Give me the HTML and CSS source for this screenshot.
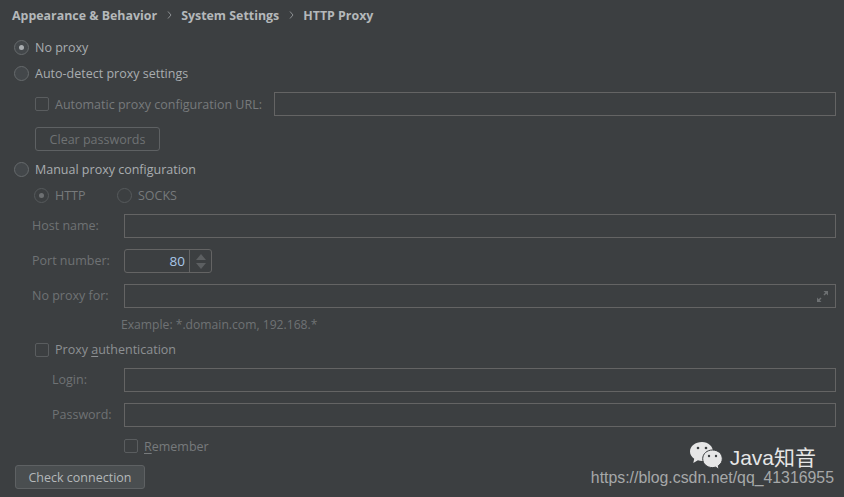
FILE: index.html
```html
<!DOCTYPE html>
<html lang="en">
<head>
<meta charset="utf-8">
<title>HTTP Proxy</title>
<link rel="stylesheet" href="styles.css">
</head>
<body>
<div class="page">
  <nav class="crumbs">
    <span>Appearance &amp; Behavior</span>
    <svg class="chev" width="5" height="8" viewBox="0 0 5 8"><path d="M1 .5 4 4 1 7.5" fill="none" stroke="#8c9093"/></svg>
    <span>System Settings</span>
    <svg class="chev" width="5" height="8" viewBox="0 0 5 8"><path d="M1 .5 4 4 1 7.5" fill="none" stroke="#8c9093"/></svg>
    <span>HTTP Proxy</span>
  </nav>

  <div class="opt r-noproxy"><span class="radio on"></span><span class="lbl">No proxy</span></div>
  <div class="opt r-auto"><span class="radio"></span><span class="lbl">Auto-detect proxy settings</span></div>

  <div class="row r-url">
    <span class="check"></span>
    <span class="lbl dim url-lbl">Automatic proxy configuration URL:</span>
    <span class="field grow"></span>
  </div>
  <div class="r-clear"><span class="btn off">Clear passwords</span></div>

  <div class="opt r-manual"><span class="radio"></span><span class="lbl">Manual proxy configuration</span></div>
  <div class="row r-type">
    <span class="radio small on"></span><span class="lbl dim type1">HTTP</span>
    <span class="radio small socks"></span><span class="lbl dim">SOCKS</span>
  </div>

  <div class="row r-host"><span class="name">Host name:</span><span class="field grow"></span></div>
  <div class="row r-port">
    <span class="name">Port number:</span>
    <span class="spin">
      <span class="spin-val">80</span>
      <span class="spin-btn">
        <svg width="10" height="15" viewBox="0 0 10 15"><path d="M5 0 10 6H0ZM0 9H10L5 15Z" fill="#5c5f61"/></svg>
      </span>
    </span>
  </div>
  <div class="row r-noproxyfor">
    <span class="name">No proxy for:</span>
    <span class="field grow expand">
      <svg width="13" height="13" viewBox="0 0 13 13"><path d="M7.500 1H12V5.500ZM5.500 12H1V7.500Z" fill="#6d7072"/><path d="M8 5 10 3M3 10l2-2" stroke="#6d7072" stroke-width="1.500"/></svg>
    </span>
  </div>
  <div class="example">Example: *.domain.com, 192.168.*</div>

  <div class="row r-proxyauth"><span class="check"></span><span class="lbl dim auth-lbl">Proxy <u>a</u>uthentication</span></div>
  <div class="row r-login"><span class="name sub">Login:</span><span class="field grow"></span></div>
  <div class="row r-pass"><span class="name sub">Password:</span><span class="field grow"></span></div>
  <div class="row r-remember"><span class="check"></span><span class="lbl dim rem-lbl"><u>R</u>emember</span></div>
  <div class="r-check"><span class="btn">Check connection</span></div>

  <div class="mark">
    <div class="mark-top">
      <svg width="34" height="29" viewBox="0 0 34 29">
        <path d="M13 1C6.500 1 1 5 1 10.500c0 3 1.600 5.500 4.200 7.300L4.300 22l4.600-2.800c1.300.4 2.700.8 4.100.8 7 0 11-4.500 11-9.500S19.500 1 13 1Z" fill="#e6e6e6"/>
        <path d="M23.500 9c-5.500 0-9.800 3.700-9.800 8.800s4.300 8.800 9.800 8.800c1.100 0 2-.2 3-.5l3.500 2.200-.7-3.600c2.500-1.500 4-4 4-6.900C33.300 12.700 29 9 23.500 9Z" fill="#e6e6e6" stroke="#3c3f41"/>
        <circle cx="9" cy="7" r="1.300" fill="#3c3f41"/><circle cx="17" cy="7" r="1.300" fill="#3c3f41"/>
        <circle cx="20" cy="15" r="1.200" fill="#3c3f41"/><circle cx="27" cy="15" r="1.200" fill="#3c3f41"/>
      </svg>
      <span class="mark-name">Java知音</span>
    </div>
    <div class="mark-url">https://blog.csdn.net/qq_41316955</div>
  </div>
</div>
</body>
</html>
```

FILE: styles.css
```css
* { box-sizing: border-box; }
html, body { margin: 0; padding: 0; }
body { background: #3c3f41; }
.page {
  position: relative;
  width: 844px;
  height: 497px;
  overflow: hidden;
  background: #3c3f41;
  font-family: "Open Sans", "Noto Sans", sans-serif;
  font-size: 12.5px;
  color: #a9adb0;
}
.crumbs {
  display: flex;
  align-items: center;
  height: 30px;
  padding-left: 12px;
  font-size: 12.4px;
  font-weight: 700;
  color: #b4b8ba;
}
.chev { margin: 0 9.5px; }
.opt, .row { display: flex; align-items: center; }
.opt { padding-left: 14px; height: 15px; }
.r-noproxy { margin-top: 10px; }
.r-auto { margin-top: 11px; }
.r-url { margin: 11px 8px 0 35px; height: 24px; }
.r-clear { margin: 11px 0 0 35px; height: 24px; display: flex; }
.r-manual { margin-top: 11px; }
.r-type { margin: 11px 0 0 34px; height: 15px; }
.r-host { margin: 11px 8px 0 32px; height: 24px; }
.r-port { margin: 11px 8px 0 32px; height: 24px; }
.r-noproxyfor { margin: 11px 8px 0 32px; height: 24px; }
.example { margin: 9px 0 0 121px; height: 16px; line-height: 16px; color: #6f7274; font-size: 12.15px; }
.r-proxyauth { margin: 10px 0 0 35px; height: 14px; }
.r-login { margin: 11px 8px 0 52px; height: 24px; }
.r-pass { margin: 11px 8px 0 52px; height: 24px; }
.r-remember { margin: 12px 0 0 124px; height: 14px; }
.r-check { margin: 12px 0 0 15px; height: 24px; display: flex; }

.radio {
  flex: none;
  position: relative;
  width: 15px;
  height: 15px;
  border: 1px solid #666a6c;
  border-radius: 50%;
  background: #43474a;
}
.radio.on::after {
  content: "";
  position: absolute;
  left: 4px;
  top: 4px;
  width: 5px;
  height: 5px;
  border-radius: 50%;
  background: #a9adb0;
}
.radio.small { background: transparent; border-color: #565a5c; }
.radio.small.on::after { background: #6d7072; }
.lbl { margin-left: 6px; white-space: nowrap; }
.dim { color: #777a7c; }
.type1 { width: 62px; }
.r-proxyauth .dim { color: #8d9093; }
.auth-lbl { padding-bottom: 1px; }
.check {
  flex: none;
  width: 14px;
  height: 14px;
  border: 1px solid #5a5d5f;
  border-radius: 2px;
  background: transparent;
}
.url-lbl { width: 219px; }
u { text-underline-offset: 2px; }
.field {
  display: flex;
  align-items: center;
  justify-content: flex-end;
  height: 24px;
  border: 1px solid #646464;
  background: transparent;
}
.grow { flex: 1; }
.expand { padding-right: 6px; }
.name { flex: none; width: 92px; padding-bottom: 1px; color: #6f7274; white-space: nowrap; }
.name.sub { width: 72px; }
.spin {
  display: flex;
  width: 88px;
  height: 24px;
  border: 1px solid #646464;
  border-radius: 3px;
}
.spin-val { flex: 1; padding-right: 4px; text-align: right; font-size: 13.5px; line-height: 22px; color: #a9c7e8; }
.spin-btn {
  display: flex;
  align-items: center;
  justify-content: center;
  width: 22px;
  border-left: 1px solid #646464;
}
.btn {
  display: flex;
  align-items: center;
  justify-content: center;
  height: 24px;
  border: 1px solid #5e6163;
  border-radius: 3px;
  background: #4a4e50;
  color: #b4b8ba;
  white-space: nowrap;
  width: 130px;
}
.btn.off { width: 125px; background: transparent; color: #6f7274; }
.mark {
  position: absolute;
  right: 10px;
  top: 441px;
  display: flex;
  flex-direction: column;
  align-items: flex-end;
  font-family: "Liberation Sans", sans-serif;
}
.mark-top { display: flex; align-items: center; gap: 7px; height: 29px; padding-right: 18px; }
.mark-name { font-family: "Liberation Sans", "Noto Sans CJK SC", sans-serif; font-size: 21px; color: #e6e6e6; }
.mark-url { font-size: 15.85px; line-height: 16px; color: #a6a8a9; }
```
